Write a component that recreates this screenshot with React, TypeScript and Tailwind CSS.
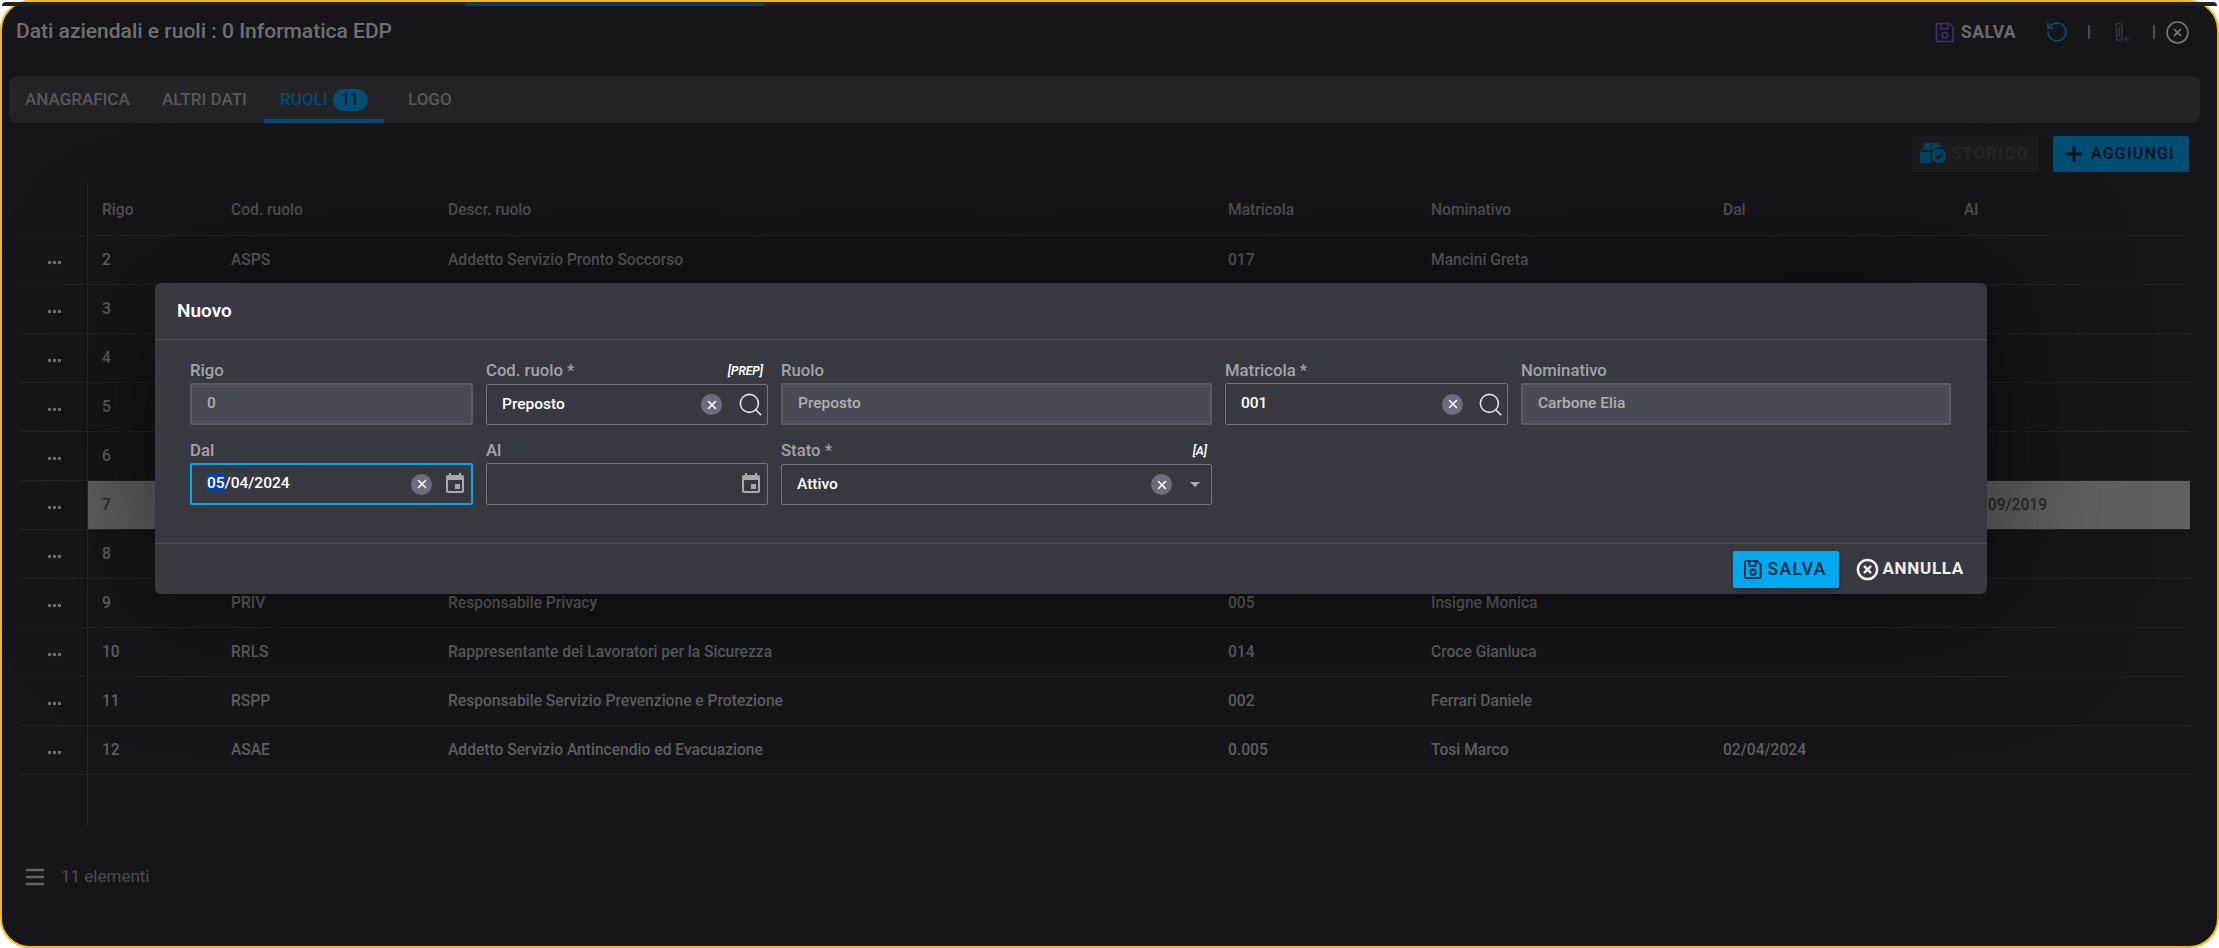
import { CircleX, Menu, MoreHorizontal, Plus, RotateCcw, Search, X } from "lucide-react";
import type { ReactNode } from "react";

type Row = {
  rigo: string;
  cod?: string;
  descr?: string;
  matricola?: string;
  nominativo?: string;
  dal?: string;
  al?: string;
  selected?: boolean;
};

const rows: Row[] = [
  { rigo: "2", cod: "ASPS", descr: "Addetto Servizio Pronto Soccorso", matricola: "017", nominativo: "Mancini Greta" },
  { rigo: "3" },
  { rigo: "4" },
  { rigo: "5" },
  { rigo: "6" },
  { rigo: "7", al: "01/09/2019", selected: true },
  { rigo: "8" },
  { rigo: "9", cod: "PRIV", descr: "Responsabile Privacy", matricola: "005", nominativo: "Insigne Monica" },
  { rigo: "10", cod: "RRLS", descr: "Rappresentante dei Lavoratori per la Sicurezza", matricola: "014", nominativo: "Croce Gianluca" },
  { rigo: "11", cod: "RSPP", descr: "Responsabile Servizio Prevenzione e Protezione", matricola: "002", nominativo: "Ferrari Daniele" },
  { rigo: "12", cod: "ASAE", descr: "Addetto Servizio Antincendio ed Evacuazione", matricola: "0.005", nominativo: "Tosi Marco", dal: "02/04/2024" },
];

function SaveIcon({ className, stroke = "1.6" }: { className: string; stroke?: string }) {
  return (
    <svg viewBox="0 0 20 22" fill="none" stroke="currentColor" strokeWidth={stroke} className={className}>
      <path d="M2.5 1.5h12l4 4v13a2 2 0 0 1-2 2h-14a1.5 1.5 0 0 1-1.5-1.5v-16a1.5 1.5 0 0 1 1.5-1.5z" />
      <path d="M6 1.5v5.5h7v-5.5" />
      <circle cx="10" cy="14" r="3" />
    </svg>
  );
}

function CalendarIcon() {
  return (
    <svg viewBox="0 0 24 24" fill="currentColor" className="h-6 w-6 text-[#a9a9ae]">
      <path d="M17 12h-5v5h5v-5zM16 1v2H8V1H6v2H5c-1.11 0-1.99.9-1.99 2L3 19c0 1.1.89 2 2 2h14c1.1 0 2-.9 2-2V5c0-1.1-.9-2-2-2h-1V1h-2zm3 18H5V8h14v11z" />
    </svg>
  );
}

function ClearButton() {
  return (
    <span className="flex h-[21px] w-[21px] items-center justify-center rounded-full bg-[#6d6d80] text-white">
      <X size={14} strokeWidth={2.6} />
    </span>
  );
}

function Field({
  label,
  hint,
  value,
  disabled,
  focused,
  low,
  children,
}: {
  label: string;
  hint?: string;
  value?: ReactNode;
  disabled?: boolean;
  focused?: boolean;
  low?: boolean;
  children?: ReactNode;
}) {
  let box = "border border-[#74747c] text-white";
  if (disabled) box = "border-2 border-[#5c5c68] bg-[#4a4a55] text-[#b0b0b4]";
  if (focused) box = "border-2 border-[#00a8f0] text-white";

  return (
    <div className="flex min-w-0 flex-col">
      <div className={low ? "flex h-[25px] items-start justify-between pr-[5px]" : "flex h-[23px] items-start justify-between pr-[5px]"}>
        <span className="text-[16.7px] leading-[22px] font-medium text-[#a3a3a8]">{label}</span>
        {hint && <span className="pt-[3px] text-[12px] leading-[16px] font-semibold text-white italic">{hint}</span>}
      </div>
      <div className={`flex h-[42px] items-center rounded-[2px] pr-1 pl-[15px] text-[15.5px] font-medium ${box}`}>
        <span className="flex-1 truncate">{value}</span>
        {children}
      </div>
    </div>
  );
}

function TableRow({ row }: { row: Row }) {
  const text = row.selected ? "text-[#2b2b2b]" : "text-[#5f5f63]";
  return (
    <div className="flex h-[49px] border-b border-[#232328] text-[15.6px] font-medium">
      <div className="flex w-[67px] items-center justify-center border-r border-[#232328] pt-1 text-[#77777b]">
        <MoreHorizontal size={17} strokeWidth={2.8} />
      </div>
      <div className={`flex flex-1 items-center pt-px ${row.selected ? "bg-[#606060]" : ""} ${text}`}>
        <div className="w-[143px] pl-[14px]">{row.rigo}</div>
        <div className="w-[217px]">{row.cod}</div>
        <div className="w-[780px]">{row.descr}</div>
        <div className="w-[203px]">{row.matricola}</div>
        <div className="w-[292px]">{row.nominativo}</div>
        <div className="w-[241px]">{row.dal}</div>
        <div>{row.al}</div>
      </div>
    </div>
  );
}

export default function App() {
  return (
    <div className="relative h-[948px] w-[2219px] overflow-hidden bg-white font-['Roboto',sans-serif]">
      <div className="flex h-full flex-col rounded-[30px] border-2 border-[#f5b90f] bg-[#15151a]">
        {/* progress strip */}
        <div className="h-1 shrink-0 rounded-t-[28px] bg-[#212126]">
          <div className="ml-[464px] h-[3px] w-[298px] translate-y-[1px] bg-[#01435f]" />
        </div>

        {/* title */}
        <div className="flex h-[52px] shrink-0 items-center justify-between pr-[27px] pl-[14px]">
          <h1 className="text-[21px] font-medium text-[#6f6f72]">Dati aziendali e ruoli : 0 Informatica EDP</h1>
          <div className="flex items-center">
            <SaveIcon className="mr-[6px] h-[21px] w-[20px] text-[#402f75]" />
            <span className="text-[17.5px] font-bold tracking-[0.4px] text-[#6a6a6c]">SALVA</span>
            <RotateCcw size={24} strokeWidth={1.6} className="ml-[29px] text-[#04506f]" />
            <span className="ml-[19px] h-[14px] w-[2px] bg-[#4a4a4e]" />
            <svg viewBox="0 0 20 24" fill="none" strokeWidth="1.8" className="ml-[23px] h-[22px] w-[18px]">
              <path d="M3 6a3.5 3.5 0 0 1 7 0v12a3 3 0 0 1-6 0V7" stroke="#35353a" />
              <path d="M7 6v11" stroke="#35353a" />
              <path d="M11 20h7M14.5 16.5v7" stroke="#06394f" />
            </svg>
            <span className="ml-[22px] h-[14px] w-[2px] bg-[#4a4a4e]" />
            <CircleX size={25} strokeWidth={1.5} className="ml-[10px] text-[#77777a]" />
          </div>
        </div>

        {/* tabs */}
        <div className="mt-[18px] mr-[17px] ml-[7px] flex h-[47px] shrink-0 rounded-lg bg-[#222227] text-[17px] font-medium text-[#57575c]">
          <div className="flex w-[137px] items-center pl-4">ANAGRAFICA</div>
          <div className="flex w-[118px] items-center pl-4">ALTRI DATI</div>
          <div className="flex w-[120px] items-center border-b-4 border-[#014d73] pt-1 pl-4 text-[#014d73]">
            RUOLI
            <span className="ml-[5px] flex h-[22px] w-[35px] items-center justify-center rounded-full bg-[#014d73] text-[16px] font-normal text-[#111]">11</span>
          </div>
          <div className="ml-2 flex items-center pl-4">LOGO</div>
        </div>

        {/* toolbar */}
        <div className="mt-[13px] mr-[28px] flex shrink-0 justify-end gap-[14px]">
          <div className="flex h-9 w-[127px] items-center rounded-[2px] bg-[#1b1b20] pl-2 text-[16px] font-bold tracking-[1.6px] text-[#25252a]">
            <svg viewBox="0 0 28 22" className="mr-[3px] h-[22px] w-[28px] text-[#01435f]" fill="currentColor">
              <path d="M5 0h6v7H2zM12 0h7l2 3-6 4h-3zM0 9h11v11H0zM12 9h4v11h-4z" />
              <circle cx="19" cy="13" r="8" stroke="#15151a" strokeWidth="1" />
              <path d="M15.5 13l2.5 2.5 4.5-4.5" fill="none" stroke="#15151a" strokeWidth="1.5" />
            </svg>
            <span>STORICO</span>
          </div>
          <div className="flex h-9 w-[136px] items-center rounded-[2px] bg-[#004d73] pl-[10px] text-[16px] font-semibold tracking-[1.2px] text-[#0a1420]">
            <Plus size={22} strokeWidth={3.2} className="mr-[6px]" />
            AGGIUNGI
          </div>
        </div>

        {/* table */}
        <div className="mt-[11px] mr-[27px] ml-[19px] shrink-0">
          <div className="flex h-[53px] border-b border-[#232328] text-[15.6px] font-medium text-[#515155]">
            <div className="w-[67px] border-r border-[#232328]" />
            <div className="flex flex-1 items-center pt-[3px]">
              <div className="w-[143px] pl-[14px]">Rigo</div>
              <div className="w-[217px]">Cod. ruolo</div>
              <div className="w-[780px]">Descr. ruolo</div>
              <div className="w-[203px]">Matricola</div>
              <div className="w-[292px]">Nominativo</div>
              <div className="w-[241px]">Dal</div>
              <div>Al</div>
            </div>
          </div>
          {rows.map((row) => (
            <TableRow key={row.rigo} row={row} />
          ))}
          <div className="h-[52px] w-[67px] border-r border-[#232328]" />
        </div>

        {/* footer */}
        <div className="mt-[37px] ml-[21px] flex shrink-0 items-center gap-[14px] text-[#4c4c50]">
          <Menu size={24} strokeWidth={2.6} className="text-[#626266]" />
          <span className="text-[17px]">11 elementi</span>
        </div>
      </div>

      {/* dialog */}
      <div className="absolute top-[283px] left-[155px] flex h-[311px] w-[1832px] flex-col rounded-md bg-[#383841] shadow-[0_0_140px_rgba(0,0,0,0.55)]">
        <div className="flex h-[57px] shrink-0 items-center border-b border-[#50505a] pl-[22px] text-[19px] font-semibold text-white">
          Nuovo
        </div>
        <div className="flex-1 px-[35px] pt-5">
          <div className="grid grid-cols-[283px_282px_431px_283px_430px] gap-x-[13px] gap-y-[15px] [grid-auto-rows:65px]">
            <Field label="Rigo" value="0" disabled />
            <Field label="Cod. ruolo *" hint="[PREP]" value="Preposto" low>
              <ClearButton />
              <Search size={27} strokeWidth={1.4} className="-mr-px ml-[15px] text-[#e2e2e4]" />
            </Field>
            <Field label="Ruolo" value="Preposto" disabled />
            <Field label="Matricola *" value="001">
              <ClearButton />
              <Search size={27} strokeWidth={1.4} className="-mr-px ml-[14px] text-[#e2e2e4]" />
            </Field>
            <Field label="Nominativo" value="Carbone Elia" disabled />
            <Field
              label="Dal"
              value={
                <>
                  <span className="bg-[#0a3fae]">05</span>/04/2024
                </>
              }
              focused
            >
              <ClearButton />
              <span className="ml-[11px]">
                <CalendarIcon />
              </span>
            </Field>
            <Field label="Al">
              <CalendarIcon />
            </Field>
            <Field label="Stato *" hint="[A]" value="Attivo" low>
              <ClearButton />
              <span className="mr-[7px] ml-[18px] h-0 w-0 border-x-[5px] border-t-[5px] border-x-transparent border-t-[#a9a9ae]" />
            </Field>
          </div>
        </div>
        <div className="flex h-[51px] shrink-0 items-center justify-end border-t border-[#50505a] pr-[23px]">
          <div className="flex h-[37px] w-[106px] items-center rounded-[2px] bg-[#00a8f0] pl-[11px] text-[17.5px] font-medium tracking-[1.4px] text-[#0a2a44] shadow-md">
            <SaveIcon className="mr-[6px] h-[21px] w-[18px]" stroke="2" />
            SALVA
          </div>
          <div className="ml-[17px] flex items-center text-[17px] font-bold tracking-[0.7px] text-[#efeff0]">
            <CircleX size={23} strokeWidth={2.6} className="mr-[4px]" />
            ANNULLA
          </div>
        </div>
      </div>
    </div>
  );
}
